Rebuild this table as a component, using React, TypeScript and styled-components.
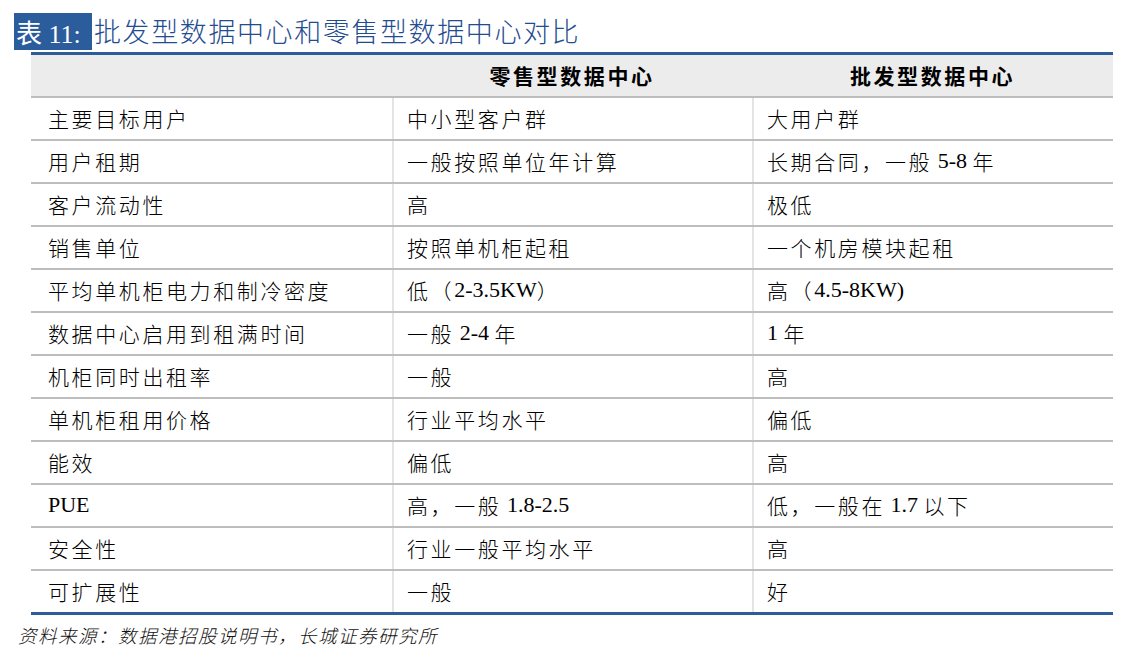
import React from "react";
import styled, { createGlobalStyle } from "styled-components";

const Global = createGlobalStyle`
  html, body { margin: 0; padding: 0; background: #ffffff; }
  body { font-family: "Liberation Serif", "Noto Sans CJK SC", serif; color: #000; }
`;

const Page = styled.div`
  width: 1127px;
  height: 660px;
  padding: 13px 0 0 0;
  box-sizing: border-box;
`;

const TitleBar = styled.div`
  display: flex;
  align-items: center;
  height: 37px;
  padding-left: 14px;
`;

const Badge = styled.div`
  height: 37px;
  width: 78px;
  box-sizing: border-box;
  padding-left: 2px;
  background: #2b5c9b;
  color: #ffffff;
  display: flex;
  align-items: center;
  font-size: 26px;
  font-weight: 400;
  white-space: pre;
`;

const TitleText = styled.div`
  margin-left: 2px;
  color: #1f4d8f;
  font-size: 27px;
  letter-spacing: 1.6px;
  font-weight: 300;
  font-family: "Noto Sans CJK SC", sans-serif;
  line-height: 37px;
  margin-top: -3px;
`;

const Table = styled.div`
  margin: 2px 0 0 31px;
  width: 1082px;
  border-top: 3px solid #2c5d98;
  border-bottom: 3px solid #2c5d98;
`;

const HeadRow = styled.div`
  display: grid;
  grid-template-columns: 361px 360px 361px;
  height: 40.5px;
  background: #ececec;
  border-bottom: 2px solid #bdbdbd;
`;

const HeadCell = styled.div`
  display: flex;
  align-items: center;
  justify-content: center;
  font-family: "Noto Sans CJK SC", sans-serif;
  font-weight: 700;
  font-size: 21px;
  letter-spacing: 2.6px;
`;

const Row = styled.div<{ $last?: boolean }>`
  display: grid;
  grid-template-columns: 361px 360px 361px;
  height: 41px;
  border-bottom: ${(p) => (p.$last ? "none" : "2px solid #bdbdbd")};
`;

const Cell = styled.div<{ $divider?: boolean }>`
  display: flex;
  align-items: center;
  padding-left: ${(p) => (p.$divider ? "13px" : "17px")};
  border-left: ${(p) => (p.$divider ? "2px solid #e4e4e4" : "none")};
  font-family: "Liberation Serif", "Noto Sans CJK SC", serif;
  font-weight: 300;
  font-size: 21px;
  letter-spacing: 2.6px;
  white-space: pre;
`;

const Latin = styled.span`
  letter-spacing: 0;
  font-weight: 400;
  font-size: 22px;
`;

const Source = styled.div`
  margin: 7px 0 0 18px;
  font-style: italic;
  font-size: 18.5px;
  font-weight: 300;
  letter-spacing: 1.5px;
  font-family: "Noto Sans CJK SC", sans-serif;
  color: #111;
`;

const rows: [string, string, string][] = [
  ["主要目标用户", "中小型客户群", "大用户群"],
  ["用户租期", "一般按照单位年计算", "长期合同，一般 5-8 年"],
  ["客户流动性", "高", "极低"],
  ["销售单位", "按照单机柜起租", "一个机房模块起租"],
  ["平均单机柜电力和制冷密度", "低（2-3.5KW）", "高（4.5-8KW)"],
  ["数据中心启用到租满时间", "一般 2-4 年", "1 年"],
  ["机柜同时出租率", "一般", "高"],
  ["单机柜租用价格", "行业平均水平", "偏低"],
  ["能效", "偏低", "高"],
  ["PUE", "高，一般 1.8-2.5", "低，一般在 1.7 以下"],
  ["安全性", "行业一般平均水平", "高"],
  ["可扩展性", "一般", "好"],
];

const latinRe = /([A-Za-z0-9.\-() ]*[A-Za-z0-9.\-()]+[A-Za-z0-9.\-() ]*)/;

function renderText(t: string) {
  const parts = t.split(latinRe);
  return parts.map((p, i) =>
    i % 2 === 1 ? <Latin key={i}>{p}</Latin> : <React.Fragment key={i}>{p}</React.Fragment>
  );
}

export default function App() {
  return (
    <>
      <Global />
      <Page>
        <TitleBar>
          <Badge>表 11:</Badge>
          <TitleText>批发型数据中心和零售型数据中心对比</TitleText>
        </TitleBar>
        <Table>
          <HeadRow>
            <HeadCell />
            <HeadCell>零售型数据中心</HeadCell>
            <HeadCell>批发型数据中心</HeadCell>
          </HeadRow>
          {rows.map((r, i) => (
            <Row key={i} $last={i === rows.length - 1}>
              <Cell>{renderText(r[0])}</Cell>
              <Cell $divider>{renderText(r[1])}</Cell>
              <Cell $divider>{renderText(r[2])}</Cell>
            </Row>
          ))}
        </Table>
        <Source>资料来源：数据港招股说明书，长城证券研究所</Source>
      </Page>
    </>
  );
}
